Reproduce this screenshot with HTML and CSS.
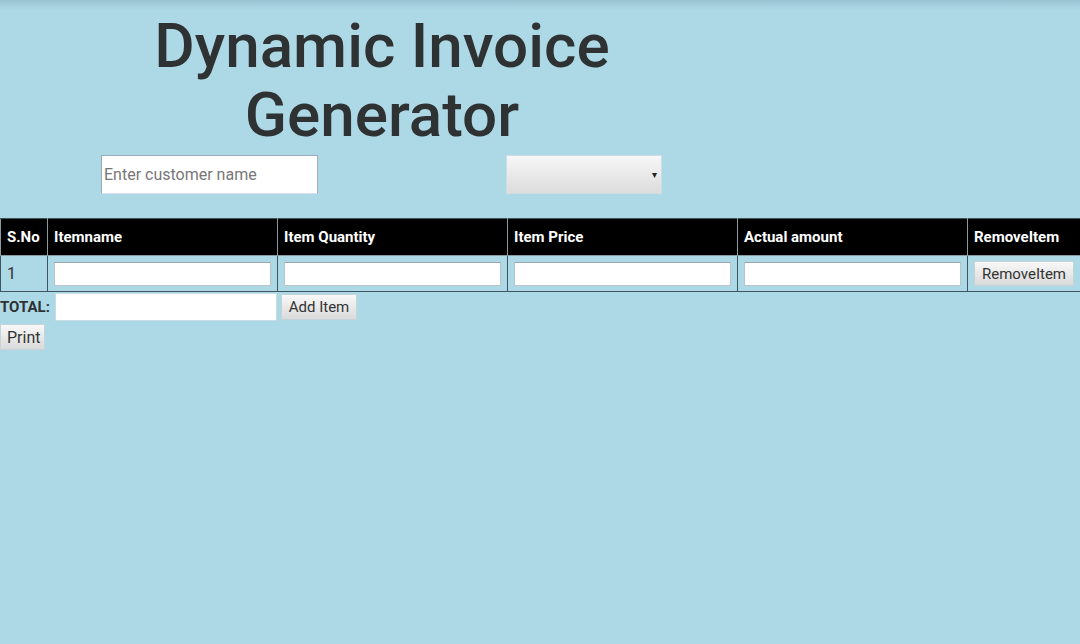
FILE: index.html
```html
<!DOCTYPE html>
<html>
<head>
<meta charset="utf-8">
<title>Dynamic Invoice Generator</title>
<link rel="stylesheet" href="styles.css">
</head>
<body>
<div class="top-shade"></div>
<header class="header">
  <h1 class="title">Dynamic Invoice Generator</h1>
  <div class="customer-row">
    <input class="customer-input" type="text" placeholder="Enter customer name">
    <div class="fake-select"><span class="arrow">▾</span></div>
  </div>
</header>
<table class="invoice">
  <thead>
    <tr>
      <th class="c-sno">S.No</th>
      <th class="c-col">Itemname</th>
      <th class="c-col">Item Quantity</th>
      <th class="c-col">Item Price</th>
      <th class="c-col">Actual amount</th>
      <th class="c-rm">RemoveItem</th>
    </tr>
  </thead>
  <tbody>
    <tr>
      <td class="c-sno">1</td>
      <td class="c-col"><input class="cell-input" type="text"></td>
      <td class="c-col"><input class="cell-input" type="text"></td>
      <td class="c-col"><input class="cell-input" type="text"></td>
      <td class="c-col"><input class="cell-input" type="text"></td>
      <td class="c-rm"><button class="btn">RemoveItem</button></td>
    </tr>
  </tbody>
</table>
<div class="total-row">
  <span class="total-label">TOTAL:</span>
  <input class="total-input" type="text">
  <button class="btn btn-add">Add Item</button>
</div>
<div class="print-row">
  <button class="btn">Print</button>
</div>
</body>
</html>
```
FILE: styles.css
```css
html, body {
  margin: 0;
  padding: 0;
}
body {
  background: #add8e6;
  font-family: Roboto, "Liberation Sans", sans-serif;
  color: #333;
  height: 644px;
  position: relative;
}
.top-shade {
  position: absolute;
  left: 0;
  right: 0;
  top: 0;
  height: 10px;
  background: linear-gradient(to bottom, rgba(60,100,120,0.18), rgba(60,100,120,0));
}
.header {
  width: 764px;
}
.title {
  width: 600px;
  margin: 11px 0 0 82px;
  font-size: 62px;
  font-weight: 500;
  line-height: 69px;
  text-align: center;
  color: #2f3233;
}
.customer-row {
  display: flex;
  align-items: center;
  padding-left: 101px;
  gap: 188px;
  margin-top: 6px;
}
.customer-input {
  box-sizing: border-box;
  width: 217px;
  height: 39px;
  margin: 0;
  padding: 0 2px;
  border: 1px solid #9ab;
  border-bottom-color: #dde;
  border-right-color: #aab;
  background: #fff;
  font-family: Roboto, sans-serif;
  font-size: 16px;
  color: #333;
  outline: none;
}
.customer-input::placeholder {
  color: #777;
}
.fake-select {
  box-sizing: border-box;
  width: 156px;
  height: 39px;
  border: 1px solid #cfdde2;
  background: linear-gradient(to bottom, #f7f7f7, #dcdcdc);
  display: flex;
  align-items: center;
  justify-content: flex-end;
  padding-right: 4px;
}
.arrow {
  font-size: 10px;
  color: #222;
}
.invoice {
  border-collapse: collapse;
  width: 1080px;
  margin-top: 24px;
  table-layout: fixed;
}
.invoice th,
.invoice td {
  border: 1px solid #3e5560;
  text-align: left;
  padding: 0 6px;
}
.invoice thead th {
  background: #000;
  color: #fff;
  font-size: 15px;
  font-weight: 700;
  height: 36px;
  border-color: #8a9aa0;
  border-top-color: #3e5560;
}
.invoice td {
  height: 35px;
  font-size: 16px;
  color: #333;
}
.c-sno { width: 34px; }
.c-col { width: 217px; }
.c-rm { width: 100px; }
.cell-input {
  box-sizing: border-box;
  width: 217px;
  height: 24px;
  margin: 0;
  border: 1px solid #b8c4c8;
  border-top-color: #9aa8ad;
  background: #fff;
  display: block;
}
.btn {
  box-sizing: border-box;
  margin: 0;
  padding: 0 6px;
  height: 25px;
  border: 1px solid #c6d4d8;
  background: linear-gradient(to bottom, #f8f8f8, #dadada);
  font-family: Roboto, sans-serif;
  font-size: 15px;
  color: #333;
  display: block;
}
.invoice .btn {
  width: 100px;
}
.total-row {
  display: flex;
  align-items: center;
  height: 29px;
}
.total-label {
  font-size: 15px;
  font-weight: 700;
  color: #2f3233;
  width: 55px;
}
.total-input {
  box-sizing: border-box;
  width: 222px;
  height: 28px;
  margin: 0;
  border: 1px solid #c8dde3;
  background: #fff;
}
.btn-add {
  margin-left: 4px;
  width: 76px;
  height: 26px;
}
.print-row {
  margin-top: 3px;
}
.print-row .btn {
  width: 45px;
  height: 26px;
  font-size: 16px;
}
```
